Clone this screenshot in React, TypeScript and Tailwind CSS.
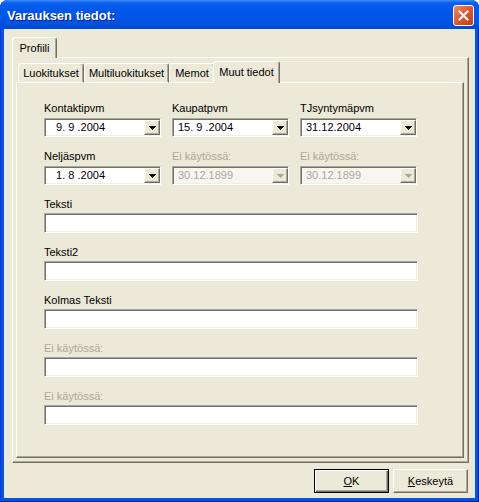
import React from 'react';

const raised =
  'border border-t-white border-l-white border-r-[#716F64] border-b-[#716F64] shadow-[inset_-1px_-1px_0_#ACA899]';
const sunken =
  'border border-t-[#ACA899] border-l-[#ACA899] border-r-white border-b-white shadow-[inset_1px_1px_0_#716F64,inset_-1px_-1px_0_#F1EFE2]';

const Arrow = ({ disabled }: { disabled?: boolean }) => {
  const fill = disabled ? '#ACA899' : '#000000';
  return (
    <svg width="7" height="4" viewBox="0 0 7 4" shapeRendering="crispEdges">
      <rect x="0" y="0" width="7" height="1" fill={fill} />
      <rect x="1" y="1" width="5" height="1" fill={fill} />
      <rect x="2" y="2" width="3" height="1" fill={fill} />
      <rect x="3" y="3" width="1" height="1" fill={fill} />
    </svg>
  );
};

interface DateComboProps {
  label: string;
  value: string;
  disabled?: boolean;
}

const DateCombo = ({ label, value, disabled }: DateComboProps) => (
  <div className="flex flex-col gap-[3px]">
    <span className={`leading-[13px] ${disabled ? 'text-[#ACA899]' : 'text-black'}`}>{label}</span>
    <div className={`h-[19px] flex items-start ${sunken} ${disabled ? 'bg-[#F7F6F1]' : 'bg-white'}`}>
      <span
        className={`flex-1 h-full flex items-center pl-[5px] whitespace-pre leading-[13px] ${
          disabled ? 'text-[#ACA899]' : 'text-black'
        }`}
      >
        {value}
      </span>
      <div className={`mt-px w-[16px] h-[15px] flex items-center justify-center bg-[#ECE9D8] ${raised}`}>
        <Arrow disabled={disabled} />
      </div>
    </div>
  </div>
);

const TextField = ({ label, disabled }: { label: string; disabled?: boolean }) => (
  <div className="flex flex-col gap-[2px]">
    <span className={`leading-[13px] ${disabled ? 'text-[#ACA899]' : 'text-black'}`}>{label}</span>
    <div className={`w-[374px] h-[20px] bg-white ${sunken}`} />
  </div>
);

const Tab = ({ label, width }: { label: string; width: string }) => (
  <div
    className={`${width} h-[20px] flex items-center justify-center rounded-t-[3px] border-t border-l border-b border-t-white border-l-white border-b-white border-r border-r-[#716F64] shadow-[inset_-1px_0_0_#ACA899]`}
  >
    {label}
  </div>
);

const App = () => {
  return (
    <div className="w-[479px] h-[502px] flex flex-col rounded-t-[8px] overflow-hidden bg-[#0055E5] shadow-[inset_1px_0_0_#0831D9,inset_-1px_0_0_#001EA0,inset_0_-1px_0_#001EA0] font-['Liberation_Sans',Arial,sans-serif] text-[11px] text-black">
      {/* title bar */}
      <div className="h-[29px] shrink-0 flex items-center justify-between pl-[7px] pr-[5px] bg-[linear-gradient(to_bottom,#3D8DF9_0%,#0A5FEE_10%,#0058EA_35%,#0055E5_70%,#0049D6_100%)]">
        <span className="pt-[3px] text-[13px] font-bold text-white [text-shadow:1px_1px_0_#0A1E8A]">
          Varauksen tiedot:
        </span>
        <div className="mt-[1px] w-[21px] h-[21px] rounded-[3px] border border-white bg-[linear-gradient(135deg,#EE8B6B_0%,#E0572F_50%,#C03A16_100%)] flex items-center justify-center">
          <svg width="11" height="11" viewBox="0 0 11 11">
            <path d="M1.5 1.5l8 8M9.5 1.5l-8 8" stroke="#ffffff" strokeWidth="2" strokeLinecap="square" />
          </svg>
        </div>
      </div>

      {/* body */}
      <div className="flex-1 mx-[4px] mb-[4px] bg-[#ECE9D8] pl-[8px] pt-[8px] flex flex-col">
        <div className="h-[21px] -mb-px relative z-10 flex">
          <div className="w-[45px] h-[21px] flex items-center justify-center bg-[#ECE9D8] rounded-t-[3px] border-t border-l border-t-white border-l-white border-r border-r-[#716F64] shadow-[inset_-1px_0_0_#ACA899]">
            Profiili
          </div>
        </div>

        <div className={`w-[457px] h-[406px] pt-[3px] pl-[3px] ${raised}`}>
          <div className="h-[22px] -mb-px relative z-10 flex items-end pl-[2px]">
            <Tab label="Luokitukset" width="w-[66px]" />
            <Tab label="Multiluokitukset" width="w-[85px]" />
            <Tab label="Memot" width="w-[46px]" />
            <div className="w-[67px] h-[22px] -ml-[2px] flex items-center justify-center bg-[#ECE9D8] rounded-t-[3px] border-t border-l border-t-white border-l-white border-r border-r-[#716F64] shadow-[inset_-1px_0_0_#ACA899]">
              Muut tiedot
            </div>
          </div>

          <div className={`w-[448px] h-[376px] pt-[19px] pl-[27px] flex flex-col gap-[13px] ${raised}`}>
            <div className="grid grid-cols-[117px_117px_117px] gap-x-[11px]">
              <DateCombo label="Kontaktipvm" value={'  9. 9 .2004'} />
              <DateCombo label="Kaupatpvm" value="15. 9 .2004" />
              <DateCombo label="TJsyntymäpvm" value="31.12.2004" />
            </div>
            <div className="grid grid-cols-[117px_117px_117px] gap-x-[11px]">
              <DateCombo label="Neljäspvm" value={'  1. 8 .2004'} />
              <DateCombo label="Ei käytössä:" value="30.12.1899" disabled />
              <DateCombo label="Ei käytössä:" value="30.12.1899" disabled />
            </div>
            <TextField label="Teksti" />
            <TextField label="Teksti2" />
            <TextField label="Kolmas Teksti" />
            <TextField label="Ei käytössä:" disabled />
            <TextField label="Ei käytössä:" disabled />
          </div>
        </div>

        <div className="w-[456px] mt-[6px] flex justify-end gap-[4px]">
          <div className="w-[75px] h-[24px] border border-black bg-[#ECE9D8] shadow-[inset_1px_1px_0_#ffffff,inset_-1px_-1px_0_#716F64,inset_-2px_-2px_0_#ACA899] flex items-center justify-center">
            <span>
              <span className="underline">O</span>K
            </span>
          </div>
          <div className={`w-[75px] h-[24px] bg-[#ECE9D8] flex items-center justify-center ${raised}`}>
            <span>
              <span className="underline">K</span>eskeytä
            </span>
          </div>
        </div>
      </div>
    </div>
  );
};

export default App;
